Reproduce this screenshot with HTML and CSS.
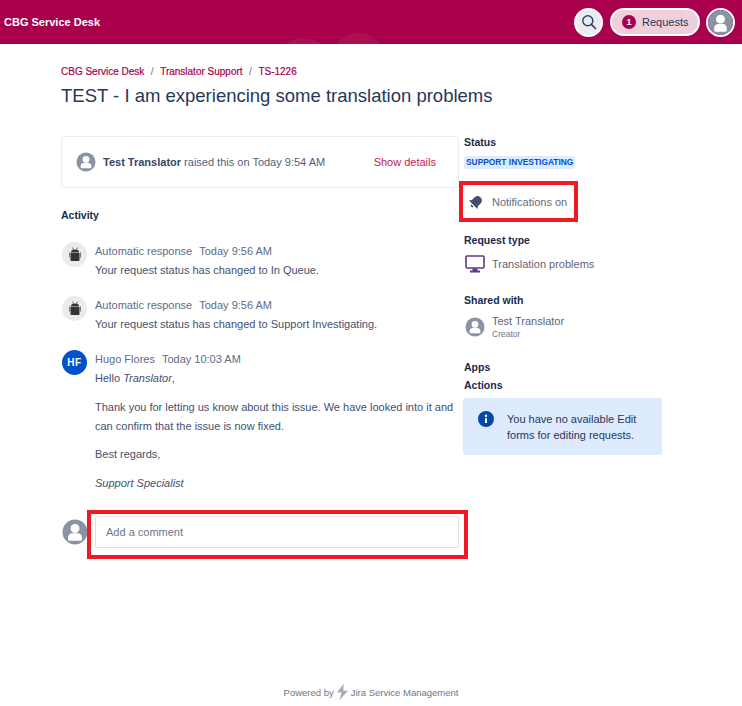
FILE: index.html
```html
<!DOCTYPE html>
<html lang="en">
<head>
<meta charset="utf-8">
<title>TS-1226</title>
<link rel="stylesheet" href="styles.css">
</head>
<body>
<header class="topbar">
  <svg class="wave" width="105" height="44" viewBox="0 0 105 44" aria-hidden="true"><path d="M5 44C15 36 30 36 42 44ZM57 44C68 29 88 29 100 44Z" fill="#ad1052"/></svg>
  <span class="brand">CBG Service Desk</span>
  <div class="top-actions">
    <button class="search-btn" aria-label="Search">
      <svg width="16" height="16" viewBox="0 0 16 16"><circle cx="6.800" cy="6.800" r="5" fill="none" stroke="#344563" stroke-width="1.500"/><path d="M10.600 10.600L14.500 14.500" stroke="#344563" stroke-width="1.700" stroke-linecap="round"/></svg>
    </button>
    <div class="requests"><span class="count">1</span><span>Requests</span></div>
    <div class="top-avatar">
      <svg width="25" height="25" viewBox="0 0 26 26"><circle cx="13" cy="13" r="13" fill="#8993a4"/><circle cx="13" cy="9.500" r="4.600" fill="#fff"/><path d="M6.500 18.500c0-2.600 2-4 4-4h5c2 0 4 1.400 4 4v2.500a1.500 1.500 0 0 1-1.500 1.500h-10a1.500 1.500 0 0 1-1.500-1.500z" fill="#fff"/></svg>
    </div>
  </div>
</header>

<main class="page">
  <nav class="crumbs"><a>CBG Service Desk</a><span class="sep">/</span><a>Translator Support</a><span class="sep">/</span><a>TS-1226</a></nav>
  <h1 class="title">TEST - I am experiencing some translation problems</h1>

  <div class="columns">
    <section class="left">
      <div class="raised">
        <svg class="avatar-sm" width="20" height="20" viewBox="0 0 20 20"><circle cx="10" cy="10" r="9.500" fill="#8993a4"/><circle cx="10" cy="7.400" r="3.400" fill="#fff"/><path d="M4.600 14c0-2 1.600-3 3-3h4.800c1.400 0 3 1 3 3v1.300a1 1 0 0 1-1 1H5.600a1 1 0 0 1-1-1z" fill="#fff"/></svg>
        <p class="raised-text"><strong>Test Translator</strong> raised this on Today 9:54 AM</p>
        <a class="details">Show details</a>
      </div>

      <h2 class="activity">Activity</h2>

      <article class="entry">
        <div class="bot"><svg width="12" height="15" viewBox="0 0 12 15"><path d="M3.500 0.500L4.500 3M8.500 0.500L7.500 3" stroke="#555" stroke-width=".8"/><path d="M2 5C2 3.500 3.500 2.500 6 2.500S10 3.500 10 5z" fill="#333"/><rect x="1.500" y="5.500" width="9" height="8.500" rx=".8" fill="#333"/><rect x="0" y="5.500" width="1" height="5" fill="#777"/><rect x="11" y="5.500" width="1" height="5" fill="#777"/></svg></div>
        <div class="entry-body">
          <div class="meta"><span>Automatic response</span><span>Today 9:56 AM</span></div>
          <p>Your request status has changed to In Queue.</p>
        </div>
      </article>

      <article class="entry">
        <div class="bot"><svg width="12" height="15" viewBox="0 0 12 15"><path d="M3.500 0.500L4.500 3M8.500 0.500L7.500 3" stroke="#555" stroke-width=".8"/><path d="M2 5C2 3.500 3.500 2.500 6 2.500S10 3.500 10 5z" fill="#333"/><rect x="1.500" y="5.500" width="9" height="8.500" rx=".8" fill="#333"/><rect x="0" y="5.500" width="1" height="5" fill="#777"/><rect x="11" y="5.500" width="1" height="5" fill="#777"/></svg></div>
        <div class="entry-body">
          <div class="meta"><span>Automatic response</span><span>Today 9:56 AM</span></div>
          <p>Your request status has changed to Support Investigating.</p>
        </div>
      </article>

      <article class="entry">
        <div class="hf">HF</div>
        <div class="entry-body">
          <div class="meta"><span>Hugo Flores</span><span>Today 10:03 AM</span></div>
          <p>Hello <em>Translator</em>,</p>
          <p class="para">Thank you for letting us know about this issue. We have looked into it and can confirm that the issue is now fixed.</p>
          <p class="para">Best regards,</p>
          <p class="para"><em>Support Specialist</em></p>
        </div>
      </article>

      <div class="comment-row">
        <svg class="avatar-md" width="26" height="26" viewBox="0 0 26 26"><circle cx="13" cy="13" r="12.500" fill="#8993a4"/><circle cx="13" cy="9.500" r="4.500" fill="#fff"/><path d="M6 18.500c0-2.600 2-4.200 4-4.200h6c2 0 4 1.600 4 4.200v1.800a1.500 1.500 0 0 1-1.500 1.500h-11A1.500 1.500 0 0 1 6 20.300z" fill="#fff"/></svg>
        <div class="comment-wrap">
          <div class="comment-box">Add a comment</div>
          <span class="mark mark-comment"></span>
        </div>
      </div>
    </section>

    <aside class="side">
      <h3 class="side-head">Status</h3>
      <span class="lozenge">SUPPORT INVESTIGATING</span>
      <div class="notify">
        <svg width="16" height="16" viewBox="0 0 16 16"><g transform="rotate(45 8 8)"><path d="M8 1.500c-2.800 0-4.300 2-4.300 4.500v3.500L2 12h12l-1.700-2.500V6c0-2.500-1.500-4.500-4.300-4.500z" fill="#42526e"/><path d="M6.300 13c0 1 .8 1.700 1.700 1.700S9.700 14 9.700 13z" fill="#42526e"/></g></svg>
        <span>Notifications on</span>
        <span class="mark mark-notify"></span>
      </div>
      <h3 class="side-head type-head">Request type</h3>
      <div class="type-row">
        <svg width="20" height="18" viewBox="0 0 20 18"><rect x="1" y="1" width="18" height="12" rx="1" fill="#fff" stroke="#5e3a82" stroke-width="1.600"/><rect x="7.500" y="13.500" width="5" height="2.500" fill="#5e3a82"/><rect x="5" y="15.500" width="10" height="2" fill="#5e3a82"/></svg>
        <span>Translation problems</span>
      </div>
      <h3 class="side-head shared-head">Shared with</h3>
      <div class="shared-row">
        <svg width="20" height="20" viewBox="0 0 20 20"><circle cx="10" cy="10" r="9.500" fill="#8993a4"/><circle cx="10" cy="7.400" r="3.400" fill="#fff"/><path d="M4.600 14c0-2 1.600-3 3-3h4.800c1.400 0 3 1 3 3v1.300a1 1 0 0 1-1 1H5.600a1 1 0 0 1-1-1z" fill="#fff"/></svg>
        <div class="person"><span class="person-name">Test Translator</span><span class="person-role">Creator</span></div>
      </div>
      <h3 class="side-head apps-head">Apps</h3>
      <h3 class="side-head actions-head">Actions</h3>
      <div class="info">
        <svg width="16" height="16" viewBox="0 0 16 16"><circle cx="8" cy="8" r="8" fill="#0747a6"/><rect x="7" y="7" width="2" height="5" rx=".6" fill="#fff"/><circle cx="8" cy="4.800" r="1.200" fill="#fff"/></svg>
        <p>You have no available Edit forms for editing requests.</p>
      </div>
    </aside>
  </div>
</main>

<footer class="foot">
  <span>Powered by</span>
  <svg width="13" height="16" viewBox="0 0 13 16"><path d="M7.500 0L1 8.500h4.500L3.500 16 12 6.800H7.500z" fill="#a5adba"/></svg>
  <span>Jira Service Management</span>
</footer>
</body>
</html>
```

FILE: styles.css
```css
* { box-sizing: border-box; }
html, body { margin: 0; padding: 0; }
body {
  width: 742px;
  height: 706px;
  overflow: hidden;
  background: #fff;
  font-family: "Liberation Sans", Arial, sans-serif;
  font-size: 11px;
  color: #42526e;
  display: flex;
  flex-direction: column;
}
p, h1, h2, h3 { margin: 0; }

.topbar {
  position: relative;
  flex: none;
  height: 44px;
  background: #a8004c;
  display: flex;
  align-items: center;
  justify-content: space-between;
  padding: 0 7px 0 4px;
  overflow: hidden;
}
.wave { position: absolute; left: 280px; top: 0; }
.brand { position: relative; color: #fff; font-size: 11px; font-weight: 700; }
.top-actions { position: relative; display: flex; align-items: center; }
.search-btn {
  width: 29px; height: 29px;
  margin-right: 7px;
  padding: 0;
  border: 2px solid #fff;
  border-radius: 50%;
  background: #ebecf0;
  display: flex; align-items: center; justify-content: center;
}
.requests {
  width: 90px; height: 28px;
  margin-right: 6px;
  border: 2px solid #fff;
  border-radius: 14px;
  background: #f0cfdc;
  color: #253858;
  font-size: 11px;
  display: flex; align-items: center;
  gap: 6px;
  padding-left: 10px;
}
.count {
  width: 14px; height: 14px;
  border-radius: 50%;
  background: #a8004c;
  color: #fff;
  font-size: 9px;
  font-weight: 700;
  display: flex; align-items: center; justify-content: center;
}
.top-avatar {
  width: 29px; height: 29px;
  border: 2px solid #fff;
  border-radius: 50%;
  overflow: hidden;
}
.top-avatar svg { display: block; }

.page { flex: none; width: 601px; margin-left: 61px; padding-top: 21px; }
.crumbs { display: flex; gap: 6.500px; font-size: 10px; line-height: 14px; color: #a8004c; -webkit-text-stroke: .2px #a8004c; }
.sep { color: #6b778c; -webkit-text-stroke: 0; }
.title { font-size: 18.500px; line-height: 26px; font-weight: 400; color: #253858; margin-top: 4px; }

.columns { display: flex; gap: 5px; margin-top: 27px; }
.left { width: 398px; flex: none; }
.side { width: 198px; flex: none; margin-top: -1px; }

.raised {
  height: 52px;
  border: 1px solid #ebecf0;
  border-radius: 3px;
  display: flex;
  align-items: center;
  padding: 0 22px 0 14px;
}
.avatar-sm { flex: none; margin-right: 7px; }
.raised-text { flex: 1; color: #505f79; font-size: 11px; }
.raised-text strong { color: #344563; }
.details { color: #c2185b; font-size: 11px; }
.activity { font-size: 10.500px; line-height: 14px; font-weight: 700; color: #172b4d; margin-top: 20px; margin-bottom: 20px; }

.entry { display: flex; gap: 8px; margin-left: 1px; margin-bottom: 16px; }
.bot, .hf {
  flex: none;
  width: 25px; height: 25px;
  border-radius: 50%;
  display: flex; align-items: center; justify-content: center;
}
.bot { background: #ebebeb; }
.hf { background: #0052cc; color: #fff; font-size: 10px; font-weight: 700; letter-spacing: .6px; }
.entry-body { flex: 1; min-width: 0; line-height: 19px; font-size: 11px; }
.meta { display: flex; gap: 7px; line-height: 19px; color: #5e6c84; }
.para { margin-top: 9.500px; }

.comment-row { display: flex; align-items: center; gap: 7px; margin-top: 23px; margin-left: 1px; }
.comment-wrap { position: relative; flex: 1; }
.comment-box {
  height: 32px;
  border: 1px solid #dfe1e6;
  border-radius: 2px;
  display: flex; align-items: center;
  padding-left: 10px;
  color: #6b778c;
  font-size: 11px;
}
.mark { position: absolute; border: 4px solid #ed1c24; pointer-events: none; }
.mark-comment { left: -8px; top: -6px; width: 381px; height: 49px; }
.mark-notify { left: -5px; top: -1px; width: 119px; height: 41px; }

.side-head { font-size: 10.500px; line-height: 14px; font-weight: 700; color: #172b4d; }
.lozenge {
  display: inline-block;
  margin-top: 7px;
  padding: 0 2px;
  height: 13px;
  line-height: 13px;
  font-size: 8.400px;
  font-weight: 700;
  color: #0052cc;
  background: #deebff;
  border-radius: 3px;
}
.notify { position: relative; height: 40px; margin-top: 13px; display: flex; align-items: center; gap: 8px; padding-left: 4px; color: #5e6c84; }
.type-head { margin-top: 11px; }
.type-row { display: flex; align-items: center; gap: 7px; margin-top: 8px; margin-left: 1px; color: #5f6673; }
.shared-head { margin-top: 20px; }
.shared-row { display: flex; align-items: center; gap: 7px; margin-top: 7px; margin-left: 1px; }
.person { display: flex; flex-direction: column; }
.person-name { color: #5f6673; line-height: 14px; }
.person-role { color: #6b778c; font-size: 8.500px; line-height: 11px; margin-top: 1px; }
.apps-head { margin-top: 20px; }
.actions-head { margin-top: 4px; }
.info {
  display: flex;
  gap: 13px;
  margin-top: 6px;
  margin-left: -1px;
  padding: 13px 14px 12px 15px;
  width: 199px;
  height: 57px;
  background: #deebff;
  border-radius: 3px;
  color: #253858;
  line-height: 16px;
}
.info svg { flex: none; }

.foot {
  position: relative;
  margin-top: auto;
  height: 28px;
  display: flex;
  align-items: center;
  justify-content: center;
  gap: 2px;
  font-size: 9.500px;
  color: #6b778c;
}
```
